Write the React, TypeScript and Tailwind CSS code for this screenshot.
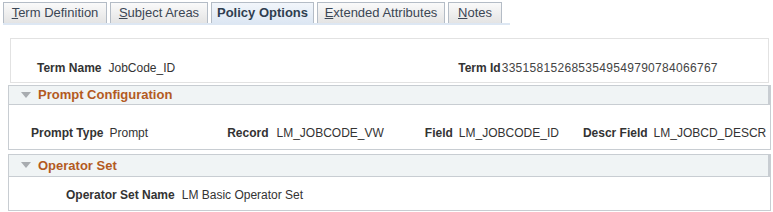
import React from "react";

function Tab({ label, u, rest, w, active }: { label?: string; u?: string; rest?: string; w: string; active?: boolean }) {
  return (
    <div
      className={
        "h-[21px] border border-b-0 border-[#b4bcc6] flex items-center justify-center text-[13px] whitespace-nowrap " +
        w +
        " " +
        (active
          ? "bg-gradient-to-b from-[#f2f6fb] to-[#dde7f3] font-bold text-[#2f3e50]"
          : "bg-gradient-to-b from-[#fafafa] to-[#e4e4e4] text-[#3b4654]")
      }
    >
      {active ? (
        label
      ) : (
        <span>
          <span className="underline">{u}</span>
          {rest}
        </span>
      )}
    </div>
  );
}

function Tri() {
  return (
    <svg width="10" height="7" viewBox="0 0 10 7" className="mr-[7px] shrink-0">
      <polygon points="0,0 10,0 5,6" fill="#a8acb0" />
    </svg>
  );
}

export default function App() {
  return (
    <div className="w-[773px] h-[212px] bg-white font-['Liberation_Sans',Arial,sans-serif] text-[12px] text-[#333] overflow-hidden whitespace-nowrap">
      <div className="flex gap-[3px] pl-[3px] pt-[2px]">
        <Tab u="T" rest="erm Definition" w="w-[104px]" />
        <Tab u="S" rest="ubject Areas" w="w-[98px]" />
        <Tab label="Policy Options" w="w-[103px]" active />
        <Tab u="E" rest="xtended Attributes" w="w-[128px]" />
        <Tab u="N" rest="otes" w="w-[54px]" />
      </div>
      <div className="ml-[3px] w-[507px] h-[2px] bg-[#dde7f3]" />

      <div className="ml-[10px] mt-[13px] w-[759px] h-[45px] border border-[#e2e2e2] flex items-start pt-[20px]">
        <span className="ml-[26px] font-bold shrink-0">Term Name</span>
        <span className="ml-[7px] shrink-0">JobCode_ID</span>
        <span className="ml-[283px] font-bold shrink-0">Term Id</span>
        <span className="ml-[1px] text-[#444] tracking-[0.3px] shrink-0">3351581526853549549790784066767</span>
      </div>

      <div className="ml-[8px] mt-[2px] w-[763px]">
        <div className="h-[20px] bg-[#f0f4f5] border border-[#c8cdd2] border-r-[3px] flex items-center pl-[12px]">
          <Tri />
          <span className="text-[13px] font-bold text-[#b35a1f]">Prompt Configuration</span>
        </div>
        <div className="h-[45px] border border-t-0 border-[#c8cdd2] flex items-start pt-[19px]">
          <span className="ml-[22px] font-bold shrink-0">Prompt Type</span>
          <span className="ml-[6px] shrink-0">Prompt</span>
          <span className="ml-[79px] font-bold shrink-0">Record</span>
          <span className="ml-[8px] shrink-0">LM_JOBCODE_VW</span>
          <span className="ml-[41px] font-bold shrink-0">Field</span>
          <span className="ml-[6px] shrink-0">LM_JOBCODE_ID</span>
          <span className="ml-[24px] font-bold shrink-0">Descr Field</span>
          <span className="ml-[6px] shrink-0">LM_JOBCD_DESCR</span>
        </div>
      </div>

      <div className="ml-[8px] mt-[4px] w-[763px]">
        <div className="h-[23px] bg-[#f0f4f5] border border-[#c8cdd2] border-r-[3px] flex items-center pl-[12px]">
          <Tri />
          <span className="text-[13px] font-bold text-[#b35a1f]">Operator Set</span>
        </div>
        <div className="h-[34px] border border-t-0 border-[#c8cdd2] flex items-start pt-[9px]">
          <span className="ml-[57px] font-bold shrink-0">Operator Set Name</span>
          <span className="ml-[7px] shrink-0">LM Basic Operator Set</span>
        </div>
      </div>
    </div>
  );
}
